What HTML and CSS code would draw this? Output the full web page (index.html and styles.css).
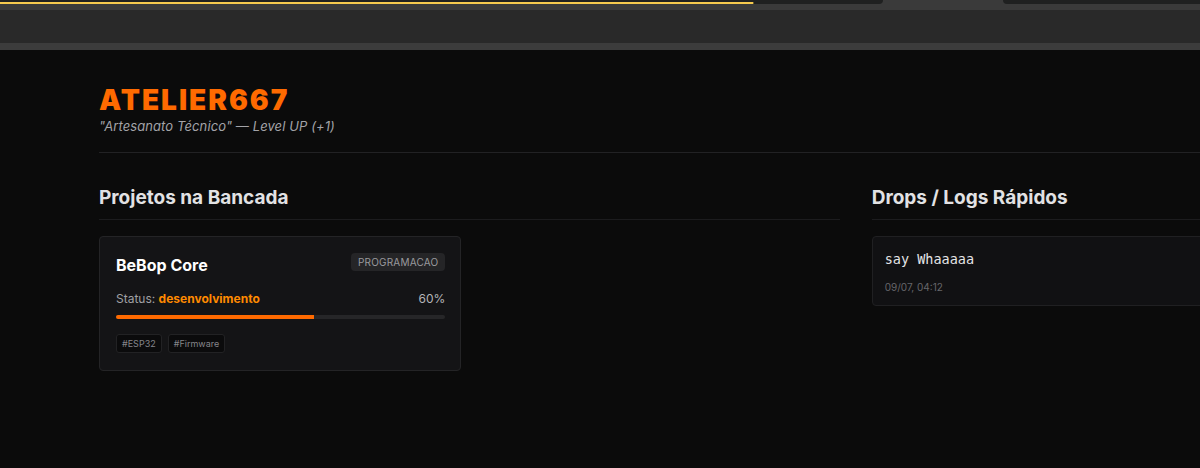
FILE: index.html
```html
<!DOCTYPE html>
<html lang="pt-BR">
<head>
<meta charset="utf-8">
<title>ATELIER667</title>
<link rel="stylesheet" href="styles.css">
</head>
<body>
  <div class="chrome">
    <div class="tabstrip">
      <div class="tab tab-left"><span class="loader"></span></div>
      <div class="tab-active"></div>
      <div class="tab tab-right"></div>
    </div>
    <div class="chrome-rim"></div>
    <div class="toolbar"></div>
    <div class="chrome-edge"></div>
  </div>

  <main class="page">
    <header class="brand">
      <h1 class="brand-title">ATELIER667</h1>
      <p class="brand-sub">"Artesanato Técnico" — Level UP (+1)</p>
    </header>

    <div class="columns">
      <section class="panel">
        <h2 class="panel-title">Projetos na Bancada</h2>
        <div class="project-grid">
          <article class="project">
            <div class="project-head">
              <h3 class="project-name">BeBop Core</h3>
              <span class="badge">PROGRAMACAO</span>
            </div>
            <div class="status-row">
              <span class="status">Status: <b class="status-value">desenvolvimento</b></span>
              <span class="percent">60%</span>
            </div>
            <div class="progress"><div class="progress-fill" style="width:60%"></div></div>
            <div class="tags">
              <span class="tag">#ESP32</span>
              <span class="tag">#Firmware</span>
            </div>
          </article>
        </div>
      </section>

      <section class="panel">
        <h2 class="panel-title">Drops / Logs Rápidos</h2>
        <article class="drop">
          <p class="drop-text">say Whaaaaa</p>
          <p class="drop-time">09/07, 04:12</p>
        </article>
      </section>
    </div>
  </main>
</body>
</html>
```

FILE: styles.css
```css
* { box-sizing: border-box; }

html, body {
  margin: 0;
  padding: 0;
  background: #0b0b0b;
  overflow: hidden;
  font-family: Inter, "Noto Sans", sans-serif;
}

/* window chrome strip */
.chrome { width: 100%; }

.tabstrip {
  height: 4px;
  display: flex;
  background: #3a3a3a;
}
.tab {
  background: #1f2020;
  height: 4px;
  position: relative;
}
.tab-left {
  width: 883px;
  border-bottom-right-radius: 6px;
}
.tab-active { width: 120px; }
.tab-right {
  flex: 1;
  border-bottom-left-radius: 6px;
}
.loader {
  position: absolute;
  left: 0;
  top: 2px;
  width: 754px;
  height: 2px;
  background: #f5c94e;
  border-right: 1px solid #6a5a2a;
}
.chrome-rim { height: 6px; background: #3a3a3a; }
.toolbar { height: 33px; background: #292929; }
.chrome-edge { height: 7px; background: #3c3c3c; }

/* page */
.page {
  width: 1143px;
  margin-left: 99px;
  padding-top: 34px;
}

.brand {
  padding-bottom: 18px;
  border-bottom: 1px solid #222224;
}
.brand-title {
  margin: 0;
  font-size: 28px;
  line-height: 32px;
  font-weight: 900;
  letter-spacing: 2px;
  color: #ff6a00;
}
.brand-sub {
  margin: 2px 0 0;
  font-size: 13px;
  line-height: 16px;
  font-style: italic;
  letter-spacing: 0.1px;
  color: #a3a3a8;
}

.columns {
  display: grid;
  grid-template-columns: 2fr 1fr;
  gap: 32px;
  margin-top: 34px;
}

.panel-title {
  margin: 0 0 16px;
  padding-bottom: 10px;
  border-bottom: 1px solid #1c1c1e;
  font-size: 19px;
  line-height: 22px;
  font-weight: 700;
  color: #e2e2e4;
}

.project-grid {
  display: grid;
  grid-template-columns: 1fr 1fr;
  gap: 16px;
}

.project {
  background: #141416;
  border: 1px solid #242426;
  border-radius: 4px;
  padding: 16px 15px 17px 16px;
}
.project-head {
  display: flex;
  justify-content: space-between;
  align-items: flex-start;
}
.project-name {
  margin: 2px 0 0;
  font-size: 16px;
  line-height: 20px;
  font-weight: 700;
  color: #ffffff;
}
.badge {
  background: #252527;
  color: #9a9a9e;
  font-size: 10px;
  line-height: 18px;
  padding: 0 7px;
  border-radius: 4px;
  letter-spacing: 0.2px;
}

.status-row {
  display: flex;
  justify-content: space-between;
  margin-top: 16px;
  font-size: 12px;
  line-height: 16px;
  color: #a0a0a4;
}
.status-value {
  color: #ff8a00;
  font-weight: 700;
}
.percent { color: #b4b4b8; }

.progress {
  margin-top: 8px;
  height: 4px;
  background: #262628;
  border-radius: 2px;
  overflow: hidden;
}
.progress-fill {
  height: 100%;
  background: #ff6a00;
}

.tags {
  display: flex;
  gap: 6px;
  margin-top: 15px;
}
.tag {
  background: #0b0b0c;
  border: 1px solid #222224;
  border-radius: 3px;
  color: #85858a;
  font-size: 9px;
  line-height: 17px;
  padding: 0 5px;
}

.drop {
  background: #111113;
  border: 1px solid #202022;
  border-radius: 4px;
  padding: 13px 12px 11px;
}
.drop-text {
  margin: 0;
  font-family: "DejaVu Sans Mono", "Liberation Mono", monospace;
  font-size: 13.5px;
  line-height: 18px;
  color: #e4e4e6;
}
.drop-time {
  margin: 12px 0 0;
  font-size: 10px;
  line-height: 14px;
  color: #66666a;
}
```
